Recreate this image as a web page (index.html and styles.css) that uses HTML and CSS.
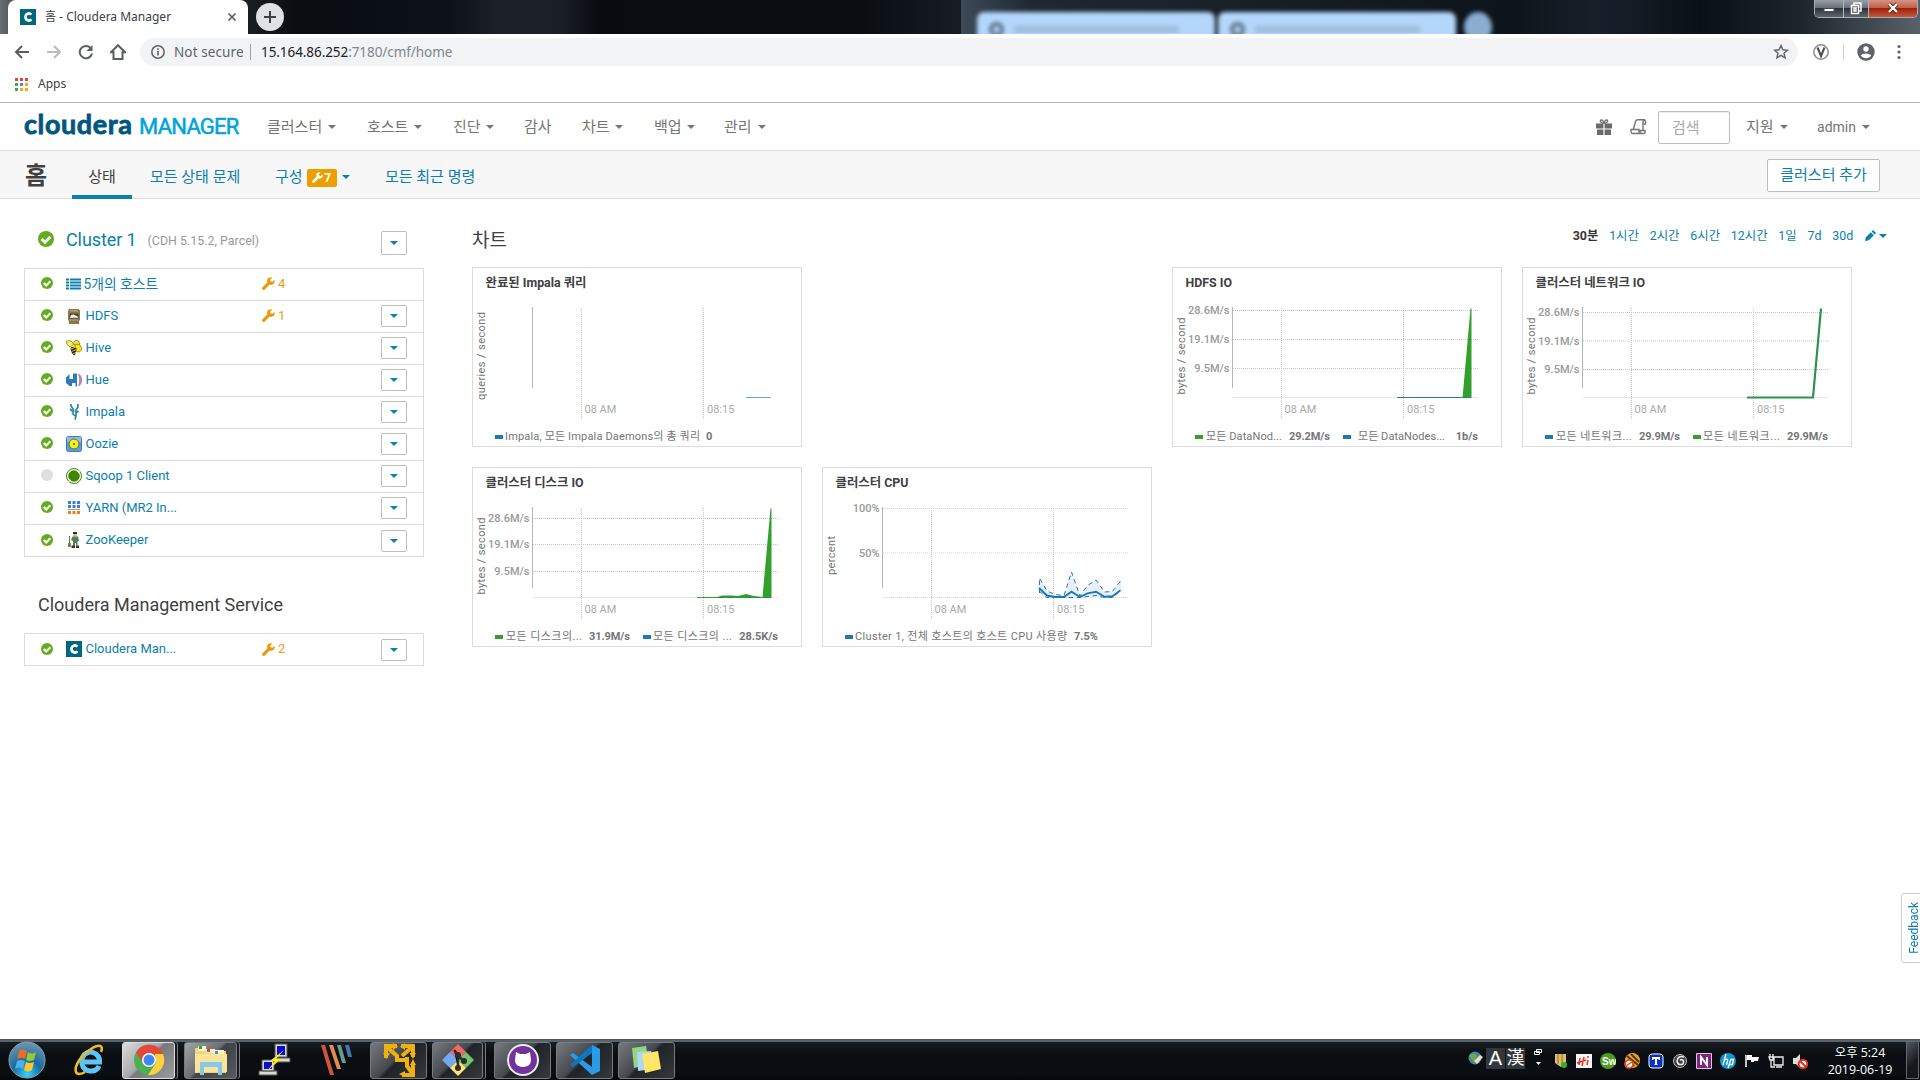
FILE: index.html
```html
<!DOCTYPE html>
<html lang="ko">
<head>
<meta charset="utf-8">
<title>홈 - Cloudera Manager</title>
<link rel="stylesheet" href="styles.css">
</head>
<body>
<svg class="defs" width="0" height="0">
  <defs>
    <symbol id="check" viewBox="0 0 16 16"><circle cx="8" cy="8" r="8" fill="#65ab1e"/><path d="M3.600 8 7 11.200 12.400 5.800" fill="none" stroke="#fff" stroke-width="2.900"/></symbol>
    <symbol id="wrench" viewBox="0 0 14 14"><path d="M1.800 12.200 7.600 6.400" stroke="currentColor" stroke-width="3.400" stroke-linecap="round"/><path d="M13.600 3.100 11 5.200 9.200 4.700 8.800 3 11 .6C8.400-.3 5.900.9 5.500 3.200 5.100 6.200 7.700 9 10.500 8.400 13 7.800 14.200 5.500 13.600 3.100Z" fill="currentColor"/></symbol>
    <symbol id="cmark" viewBox="0 0 16 16"><path fill="#00677f" d="M0 0h16v16H0z"/><path d="M11.400 5.600C9.300 3.500 5.500 4.500 5.500 8s3.800 4.500 5.900 2.400" fill="none" stroke="#fff" stroke-width="2.700"/></symbol>
  </defs>
</svg>

<div class="titlebar">
  <div class="tab">
    <svg width="16" height="16"><use href="#cmark"/></svg>
    <span class="tab-title">홈 - Cloudera Manager</span>
    <svg width="10" height="10" viewBox="0 0 10 10"><path d="M1.500 1.500l7 7m0-7l-7 7" stroke="#55595e" stroke-width="1.600"/></svg>
  </div>
  <div class="newtab"><svg width="14" height="14"><path d="M7 1v12M1 7h12" stroke="#3c4043" stroke-width="2"/></svg></div>
  <div class="glass">
    <div class="ghost"><i></i><b></b></div>
    <div class="ghost"><i></i><b></b></div>
    <div class="ghost-add"></div>
  </div>
  <div class="winbtns">
    <div class="wb wb-min"><svg width="14" height="14"><path d="M2 7.500h10v3H2z" fill="#fff" stroke="#444a55"/></svg></div>
    <div class="wb wb-max"><svg width="14" height="14" fill="none" stroke="#fff" stroke-width="1.500"><path d="M5 4V2h7v8h-2"/><path d="M2.500 4.500h7v8h-7zM5 7h2v3H5z"/></svg></div>
    <div class="wb wb-close"><svg width="14" height="14"><path d="M3 3l8 8M11 3l-8 8" stroke="#632116" stroke-width="4"/><path d="M3 3l8 8M11 3l-8 8" stroke="#fff" stroke-width="2.400"/></svg></div>
  </div>
</div>

<div class="toolbar">
  <svg class="tb" viewBox="0 0 16 16"><path d="M15 8H2M8 2 2 8l6 6" stroke="#5a5e63"/></svg>
  <svg class="tb" viewBox="0 0 16 16"><path d="M1 8h13M8 2l6 6-6 6" stroke="#b9bbbe"/></svg>
  <svg class="tb" viewBox="0 0 16 16"><path d="M13 4.500A6.200 6.200 0 1 0 14 9.500" stroke="#5a5e63"/><path d="M14.500 1v6h-6z" fill="#5a5e63"/></svg>
  <svg class="tb" viewBox="0 0 16 16"><path d="M8 1.200 1 8.200h2.500V15h9V8.200H15z" stroke="#5a5e63"/></svg>
  <div class="omnibox">
    <svg width="14" height="14"><circle cx="7" cy="7" r="6.200" fill="none" stroke="#5f6368" stroke-width="1.500"/><path d="M7 6v4.500M7 3.200v1.600" stroke="#5f6368" stroke-width="1.600"/></svg>
    <span class="notsec">Not secure</span>
    <span class="url"><em>15.164.86.252</em>:7180/cmf/home</span>
    <svg class="star" width="16" height="16"><path d="M8 1.500l1.900 4.300 4.600.4-3.500 3 1.100 4.600L8 11.400l-4.100 2.400L5 9.200l-3.500-3 4.600-.4z" fill="none" stroke="#5f6368" stroke-width="1.400"/></svg>
  </div>
  <svg class="ext" width="18" height="18"><circle cx="9" cy="9" r="7.200" fill="#fff" stroke="#8c8c8c" stroke-width="1.500"/><path d="M5.500 4.500 9 13l3.500-8.500" fill="none" stroke="#4b4b4b" stroke-width="2"/></svg>
  <i class="tb-sep"></i>
  <svg class="user" width="18" height="18"><circle cx="9" cy="9" r="8.700" fill="#5f6368"/><circle cx="9" cy="6" r="2.700" fill="#fff"/><path d="M3.800 12.600c1.500-2.800 8.900-2.800 10.400 0-2.400 3.600-8 3.600-10.400 0z" fill="#fff"/></svg>
  <svg class="kebab" width="4" height="16"><g fill="#5f6368"><circle cx="2" cy="2.500" r="1.600"/><circle cx="2" cy="8" r="1.600"/><circle cx="2" cy="13.500" r="1.600"/></g></svg>
</div>

<div class="bookmarks">
  <svg width="13" height="13"><g fill="#ea4335"><path d="M0 0h3v3H0zM5 0h3v3H5zM10 0h3v3h-3z"/></g><path d="M0 5h3v3H0zM0 10h3v3H0z" fill="#34a853"/><path d="M5 5h3v3H5z" fill="#4285f4"/><path d="M10 5h3v3h-3zM5 10h3v3H5zM10 10h3v3h-3z" fill="#fbab05"/></svg>
  <span>Apps</span>
</div>

<header class="cm-header">
  <div class="logo"><span class="logo-a">cloudera</span><span class="logo-b">MANAGER</span></div>
  <nav class="mainnav">
    <a>클러스터<i class="caret"></i></a><a>호스트<i class="caret"></i></a><a>진단<i class="caret"></i></a><a>감사</a><a>차트<i class="caret"></i></a><a>백업<i class="caret"></i></a><a>관리<i class="caret"></i></a>
  </nav>
  <svg class="gift" width="16" height="16" fill="#6a6a6a"><path d="M0 4.500h7.400v5H0zM8.600 4.500H16v5H8.600zM1 10.500h6.400V16H1zM8.600 10.500H15V16H8.600z"/><path d="M7.500 4.500C4 4 3.500 1 5.300.9c1.500 0 2.300 2 2.700 3.600.4-1.600 1.200-3.600 2.700-3.600 1.800.1 1.300 3.100-2.200 3.600" fill="none" stroke="#6a6a6a" stroke-width="1.200"/></svg>
  <svg class="scroll" width="17" height="16" fill="none" stroke="#757575" stroke-width="1.400"><path d="M3.500 10 5.500 2.500C6 .9 7 .8 8 .8h6.500c-1.500.4-1.700 1.800-1.500 4.200h2.500V2.500c0-1-.4-1.700-1.200-1.700M13 5v6M1 10.500h8v4H3c-1.300 0-2-1-2-2zM9 14.500h4.500c1.500 0 2-1.200 1.500-3h-4.500v2"/></svg>
  <div class="search">검색</div>
  <a class="h-support">지원<i class="caret"></i></a>
  <a class="h-admin">admin<i class="caret"></i></a>
</header>

<div class="subnav">
  <h1>홈</h1>
  <a class="active">상태</a>
  <a>모든 상태 문제</a>
  <a class="conf">구성<span class="badge"><svg width="11" height="11"><use href="#wrench"/></svg>7</span><i class="caret"></i></a>
  <a>모든 최근 명령</a>
  <button class="add">클러스터 추가</button>
</div>

<main class="page">
  <section class="left">
    <div class="cluster-head">
      <svg width="16" height="16"><use href="#check"/></svg>
      <a class="cname">Cluster 1</a><span class="cver">(CDH 5.15.2, Parcel)</span>
      <button class="dd"><i class="caret"></i></button>
    </div>
    <div class="services">
      <div class="row hosts"><svg class="st"><use href="#check"/></svg>
        <svg class="ic" viewBox="0 0 16 16"><path d="M0 3.500h3M4 3.500h11M0 6.500h3M4 6.500h11M0 9.500h3M4 9.500h11M0 12.500h3M4 12.500h11" stroke="#0b7fad" stroke-width="2"/></svg>
        <a>5개의 호스트</a><span class="warn"><svg width="13" height="13"><use href="#wrench"/></svg>4</span></div>
      <div class="row"><svg class="st"><use href="#check"/></svg>
        <svg class="ic" viewBox="0 0 16 16"><path d="M3 1h10l1 2v9l-1 1v3H3v-3l-1-1V3z" fill="#8d764f"/><path d="M4 2h8v1.500H4zM3.500 11.500h9v1h-9z" fill="#b79e70"/><path d="M3.500 5.500h9v5h-9z" fill="#4a453c"/><path d="M4 9.200c1-3 4-3 5-2s3 .3 3 2.500H4z" fill="#f3f5f5"/></svg>
        <a>HDFS</a><span class="warn"><svg width="13" height="13"><use href="#wrench"/></svg>1</span><button class="dd"><i class="caret"></i></button></div>
      <div class="row"><svg class="st"><use href="#check"/></svg>
        <svg class="ic" viewBox="0 0 16 16"><g stroke="#77701a" stroke-width=".8"><path d="M.5 1.500C3-.5 6.500 1 7.500 4.500L4 7C2 6 .5 4 .5 1.500z" fill="#fff34a"/><path d="M8 4.500C7 1 10-.5 12.500 1l1.500 3-3 3z" fill="#fae927"/><path d="M9 5c3-2 6.500 0 6.500 3.500S12 13 9.500 10.500z" fill="#fbe51a"/></g><path d="M4.500 8c2-2 5-1.500 6 .5 0 3-1 5-2 7-2-1-4-4-4-7.500z" fill="#2d2910"/><path d="M5 9l5-2M5.500 11.500l5-2M7 14l3-2" stroke="#dfc512"/></svg>
        <a>Hive</a><button class="dd"><i class="caret"></i></button></div>
      <div class="row"><svg class="st"><use href="#check"/></svg>
        <svg class="ic" viewBox="0 0 16 16"><path d="M0 5.500 3.500 2v12L0 11zM3.500 7H7V1.500h4v13H9.500V11H6v3H3.500z" fill="#2a7bbd"/><path d="M12 1.500c3 1 4 3.500 4 6.500s-1 5.500-4 6.500c1.500-4 1.500-9 0-13z" fill="#a985bf"/></svg>
        <a>Hue</a><button class="dd"><i class="caret"></i></button></div>
      <div class="row"><svg class="st"><use href="#check"/></svg>
        <svg class="ic" viewBox="0 0 16 16" fill="none" stroke="#3185a4" stroke-width="1.700"><path d="M5 0v2l2.500 3.500v3M12 0v3L10 6v6l-1 3.500M4 5l4 3.500M12.500 7 10 9M6 9l3 3" /></svg>
        <a>Impala</a><button class="dd"><i class="caret"></i></button></div>
      <div class="row"><svg class="st"><use href="#check"/></svg>
        <svg class="ic" viewBox="0 0 16 16"><rect x=".5" y=".5" width="15" height="15" rx="2" fill="#5d9be0" stroke="#3f77bb"/><path d="M1 1h14v5H1z" fill="#8ebcf0"/><circle cx="8" cy="8" r="5" fill="#fbf311" stroke="#596d41"/><circle cx="8" cy="8" r="1.200" fill="#6e8f26"/></svg>
        <a>Oozie</a><button class="dd"><i class="caret"></i></button></div>
      <div class="row"><svg class="st"><circle cx="6" cy="6" r="6" fill="#dedfe0"/></svg>
        <svg class="ic" viewBox="0 0 16 16"><circle cx="8" cy="8" r="7.500" fill="#fff" stroke="#398300"/><circle cx="8" cy="8" r="5.800" fill="#3e8800"/><path d="M10 2l4 1-.8 3zM2 11l3 1-1 2z" fill="#fff"/></svg>
        <a>Sqoop 1 Client</a><button class="dd"><i class="caret"></i></button></div>
      <div class="row"><svg class="st"><use href="#check"/></svg>
        <svg class="ic" viewBox="0 0 16 16"><path d="M2 1h3v3H2zM6.500 1h3v3h-3zM11 1h3v3h-3zM2 5h3v3H2zM6.500 5h3v3h-3zM11 5h3v3h-3z" fill="#3c7ed6"/><path d="M2 9h12v1H2z" fill="#999"/><path d="M2 11h3v3H2zM6.500 11h3v3h-3zM11 11h3v3h-3z" fill="#ed8015"/></svg>
        <a>YARN (MR2 In...</a><button class="dd"><i class="caret"></i></button></div>
      <div class="row"><svg class="st"><use href="#check"/></svg>
        <svg class="ic" viewBox="0 0 16 16"><path d="M3.500 4v9" stroke="#9a6844"/><path d="M2.200 11h2.600v4H2.200z" fill="#78655a"/><path d="M7 0h4v2H7z" fill="#26332f"/><path d="M7.500 2h3v2.500h-3z" fill="#d9a67d"/><path d="M6.500 4.500H12l1 4-1.500 1v4H10V11H9v3H7V9L5 8z" fill="#4d8350"/><path d="M5.500 13.500H9V16H5.500zM10 13.500h3V16h-3z" fill="#443027"/></svg>
        <a>ZooKeeper</a><button class="dd"><i class="caret"></i></button></div>
    </div>
    <h2 class="mgmt">Cloudera Management Service</h2>
    <div class="services">
      <div class="row"><svg class="st"><use href="#check"/></svg><svg class="ic"><use href="#cmark"/></svg>
        <a>Cloudera Man...</a><span class="warn"><svg width="13" height="13"><use href="#wrench"/></svg>2</span><button class="dd"><i class="caret"></i></button></div>
    </div>
  </section>

  <section class="right">
    <div class="chart-head">
      <h2>차트</h2>
      <div class="ranges"><b>30분</b><a>1시간</a><a>2시간</a><a>6시간</a><a>12시간</a><a>1일</a><a>7d</a><a>30d</a>
        <span class="edit"><svg width="11" height="11"><path d="M0 11l.8-3.800L5.800 2.200l3 3-5 5zM6.600 1.400 8 0 11 3 9.600 4.400z" fill="#0b7fad"/></svg><i class="caret"></i></span></div>
    </div>
    <div class="grid">
      <article class="card c1"><h3>완료된 Impala 쿼리</h3>
        <svg class="chart" viewBox="0 0 330 180">
          <path class="gl" d="M109.500 41v111M231.500 41v111"/><path class="ax" d="M60.500 40v81"/>
          <path d="M274 130.500h25" stroke="#6ba6d0"/>
          <text class="yl" transform="translate(13 89) rotate(-90)" textLength="88">queries / second</text>
          <text class="xl" x="112.500" y="146">08 AM</text><text class="xl" x="235" y="146">08:15</text>
          <path d="M23 168h8v4h-8z" fill="#1f77b4"/><text class="lg" x="33" y="173" textLength="195">Impala, 모든 Impala Daemons의 총 쿼리</text><text class="lg v" x="234" y="173">0</text>
        </svg></article>
      <article class="card c3"><h3>HDFS IO</h3>
        <svg class="chart" viewBox="0 0 330 180">
          <path class="gl" d="M109.500 41v111M231.500 41v111M61 43.500h245M61 72.500h245M61 101.500h245"/><path class="bl" d="M61 130.500h245"/><path class="ax" d="M60.500 40v81"/>
          <path d="M290.500 131 298.500 41.500h1V131z" fill="#33a02c"/><path d="M225 130.500h74" stroke="#2c8c4e" /><path d="M229 130.500h66" stroke="#2a7b86" stroke-dasharray="5 4"/>
          <text class="yt" x="57.500" y="47">28.6M/s</text><text class="yt" x="57.500" y="76">19.1M/s</text><text class="yt" x="57.500" y="105">9.5M/s</text>
          <text class="yl" transform="translate(13 89) rotate(-90)" textLength="77">bytes / second</text>
          <text class="xl" x="112.500" y="146">08 AM</text><text class="xl" x="235" y="146">08:15</text>
          <path d="M23 168h8v4h-8z" fill="#33a02c"/><text class="lg" x="34" y="173" textLength="76">모든 DataNod...</text><text class="lg v" x="117" y="173" textLength="41">29.2M/s</text>
          <path d="M171 168h8v4h-8z" fill="#1f77b4"/><text class="lg" x="186" y="173" textLength="87">모든 DataNodes...</text><text class="lg v e" x="306" y="173">1b/s</text>
        </svg></article>
      <article class="card c4"><h3>클러스터 네트워크 IO</h3>
        <svg class="chart" viewBox="0 0 330 180">
          <path class="gl" d="M109.500 41v111M231.500 41v111M61 45.500h245M61 74h245M61 102.500h245"/><path class="bl" d="M61 130.500h245"/><path class="ax" d="M60.500 40v81"/>
          <path d="M225 130.500h66L299 41.500" fill="none" stroke="#2b934b" stroke-width="2.200"/>
          <text class="yt" x="57.500" y="49">28.6M/s</text><text class="yt" x="57.500" y="78">19.1M/s</text><text class="yt" x="57.500" y="106">9.5M/s</text>
          <text class="yl" transform="translate(13 89) rotate(-90)" textLength="77">bytes / second</text>
          <text class="xl" x="112.500" y="146">08 AM</text><text class="xl" x="235" y="146">08:15</text>
          <path d="M23 168h8v4h-8z" fill="#1f77b4"/><text class="lg" x="34" y="173" textLength="76">모든 네트워크...</text><text class="lg v" x="117" y="173" textLength="41">29.9M/s</text>
          <path d="M171 168h8v4h-8z" fill="#33a02c"/><text class="lg" x="181" y="173" textLength="77">모든 네트워크...</text><text class="lg v e" x="306" y="173" textLength="41">29.9M/s</text>
        </svg></article>
      <article class="card"><h3>클러스터 디스크 IO</h3>
        <svg class="chart" viewBox="0 0 330 180">
          <path class="gl" d="M109.500 41v111M231.500 41v111M61 51.500h245M61 77.500h245M61 104.500h245"/><path class="bl" d="M61 130.500h245"/><path class="ax" d="M60.500 40v81"/>
          <path d="M225 131v-1h20l5-1.500h10l6 .5 8-2 8 2 8.500 1L298.500 41.500h1V131z" fill="#33a02c"/><path d="M247 130.500h52" stroke="#27826c" stroke-dasharray="5 4"/>
          <text class="yt" x="57.500" y="55">28.6M/s</text><text class="yt" x="57.500" y="81">19.1M/s</text><text class="yt" x="57.500" y="108">9.5M/s</text>
          <text class="yl" transform="translate(13 89) rotate(-90)" textLength="77">bytes / second</text>
          <text class="xl" x="112.500" y="146">08 AM</text><text class="xl" x="235" y="146">08:15</text>
          <path d="M23 168h8v4h-8z" fill="#33a02c"/><text class="lg" x="34" y="173" textLength="76">모든 디스크의...</text><text class="lg v" x="117" y="173" textLength="41">31.9M/s</text>
          <path d="M171 168h8v4h-8z" fill="#1f77b4"/><text class="lg" x="181" y="173" textLength="79">모든 디스크의 ...</text><text class="lg v e" x="306" y="173">28.5K/s</text>
        </svg></article>
      <article class="card"><h3>클러스터 CPU</h3>
        <svg class="chart" viewBox="0 0 330 180">
          <path class="gl" d="M109.500 41v111M231.500 41v111"/><path class="gl lt" d="M61 41.500h245M61 86h245M61 130.500h245"/><path class="ax" d="M60.500 40v81"/>
          <path d="M217 110l8 14 8 3.500 9 1 7.500-23.500 8.500 24 7.500-10.500 8.500-5.500 8.500 12 8-.5 8.500-11v10l-8.500 7.500H225l-8-6.500z" fill="#e7f0f7"/>
          <path d="M217.500 126v-15l7.500 13 8 3.500 9 1 7.500-23.500 8.500 24 7.500-10.500 8.500-5.500 8.500 12 8-.5 8.500-11" fill="none" stroke="#1f77b4" stroke-dasharray="4.500 3.500"/>
          <path d="M217 124l8 6.500h32l17-2 8.500 2h8l8.500-7.500" fill="none" stroke="#1f77b4" stroke-dasharray="4.500 3.500"/>
          <path d="M217 121l8 7.500 8 1.500h9l7.500-5.300 8.500 5.300 7.500-3.700 8.500-1.600 8.500 5 8-.5 8-6" fill="none" stroke="#1f77b4" stroke-width="1.900"/>
          <text class="yt" x="57.500" y="45">100%</text><text class="yt" x="57.500" y="90">50%</text>
          <text class="yl" transform="translate(13 88.500) rotate(-90)" textLength="39">percent</text>
          <text class="xl" x="112.500" y="146">08 AM</text><text class="xl" x="235" y="146">08:15</text>
          <path d="M23 168h8v4h-8z" fill="#1f77b4"/><text class="lg" x="33" y="173" textLength="212">Cluster 1, 전체 호스트의 호스트 CPU 사용량</text><text class="lg v" x="252" y="173">7.5%</text>
        </svg></article>
    </div>
  </section>
</main>
<div class="feedback"><span>Feedback</span></div>

<footer class="taskbar">
  <svg class="orb" width="40" height="38" viewBox="0 0 40 38"><defs><radialGradient id="og" cx=".5" cy=".9" r=".9"><stop offset="0" stop-color="#35d2ff"/><stop offset=".45" stop-color="#1a6a9e"/><stop offset="1" stop-color="#6f98ae"/></radialGradient></defs><circle cx="20" cy="19" r="18" fill="url(#og)" stroke="#86a3b2"/><path d="M12 10q4-3 8 0l-2 8q-4-2-8 0z" fill="#ee6a28"/><path d="M21 11q4 3 8 0l-2 8q-4 2-8 0z" fill="#94c93b"/><path d="M10 20q4-2 8 0l-2 8q-4-3-8 0z" fill="#52aee8"/><path d="M19 21q4 2 8 0l-2 8q-4 3-8 0z" fill="#fdca2e"/></svg>
  <svg class="ie" width="34" height="34" viewBox="0 0 34 34"><path d="M27 23c-3 7-15 7-17-2-2-11 10-16 16-8 2 3 1.500 4 1.500 6H11" fill="none" stroke="#5cc5f4" stroke-width="5"/><path d="M29 9C32 2 27 1 19 6 9 12 2 23 4 29c1 3 6 2 9 0" fill="none" stroke="#f2bd24" stroke-width="2.500"/></svg>
  <div class="app bright stack"><svg width="32" height="32" viewBox="0 0 32 32"><circle cx="16" cy="16" r="15" fill="#4caf50"/><path d="M3 8.500A15 15 0 0 1 30 10H16l-6 9z" fill="#e4483b"/><path d="M30 10A15 15 0 0 1 15 31l8-12-1-9z" fill="#fcd33f"/><circle cx="16" cy="16" r="7" fill="#fff"/><circle cx="16" cy="16" r="5.500" fill="#4285f4"/></svg></div>
  <div class="app stack mid"><svg width="34" height="34" viewBox="0 0 34 34"><path d="M1 5h9l2 3h20v22H1z" fill="#f1d477"/><path d="M4 3h8v5H4zM12 6h9v4h-9zM20 7h10v4H20z" fill="#fff4c9"/><path d="M1 11h32v18H1z" fill="#f8e59b"/><path d="M6 19h22v13h-4v-8H10v8H6z" fill="#86c9ea"/><path d="M5 3h3v3H5z" fill="#1fad39"/><path d="M13 6h3v3h-3z" fill="#d8452f"/><path d="M21 8h3v3h-3z" fill="#3894df"/></svg></div>
  <svg class="putty" width="34" height="34" viewBox="0 0 34 34"><g fill="#d9d9d0" stroke="#555"><path d="M17 1h12v13H17zM16 15h16v4H16zM4 17h12v11H4zM1 28h18v4H1z"/></g><path d="M19 3h8v9h-8zM6 19h8v7H6z" fill="#0b0bd0"/><path d="M26 7 12 18h5l-8 10 14-12h-5z" fill="#ffef13"/></svg>
  <svg class="stripes" width="32" height="32" viewBox="0 0 32 32"><path d="M1 1h4l9 30h-4z" fill="#d45438"/><path d="M9 1h4l8 24h-4z" fill="#e38a4d"/><path d="M17 1h4l5 18h-4z" fill="#689c8e"/><path d="M25 1h4l3 12h-4z" fill="#4479b0"/></svg>
  <div class="app vm"><svg width="34" height="34" viewBox="0 0 34 34"><g fill="none" stroke="#eeb111" stroke-width="4"><path d="M4 15V3h11M19 3h12v11M31 20v12H20M6 5l9 8v4h10M29 5l-9 8M25 14v9l5 7"/></g><path d="M1 10h7l-3.500 6zM11 0v7l5-3.500zM23 0v7l-5-3.500zM27.500 10h6.500l-3 6zM28 22h6l-3-6zM23 28v6l-6-3z" fill="#eeb111"/></svg></div>
  <div class="app git stack"><svg width="32" height="32" viewBox="0 0 32 32"><g><path d="M16 0l8 8-8 8-8-8z" fill="#f06b66"/><path d="M8 8l8 8-8 8-8-8z" fill="#74a9f4"/><path d="M24 8l8 8-8 8-8-8z" fill="#79c16d"/><path d="M16 16l8 8-8 8-8-8z" fill="#ffe37c"/></g><path d="M12 6l4 5v14M16 12l6 5" stroke="#292d2f" stroke-width="2.500"/><g fill="#292d2f"><circle cx="16" cy="11" r="3"/><circle cx="22" cy="17" r="3"/><circle cx="16" cy="24" r="3"/></g></svg></div>
  <div class="app gh"><svg width="34" height="34" viewBox="0 0 34 34"><circle cx="17" cy="17" r="15" fill="#71329b" stroke="#eee" stroke-width="2"/><path d="M10 9l4 2h6l4-2 1 8c0 5-4 7-8 7s-8-2-8-7z" fill="#fff"/></svg></div>
  <div class="app vs"><svg width="32" height="32" viewBox="0 0 32 32"><path d="M23 1l8 4v22l-8 4L1 11l3-2 19 14z" fill="#2a9be8"/><path d="M1 21l3 2L23 9V1z" fill="#0b78c2"/></svg></div>
  <div class="app st-notes"><svg width="34" height="32" viewBox="0 0 34 32"><path d="M2 4l14-2 3 18-15 4z" fill="#93d585"/><path d="M7 8l14-1 2 18-15 2z" fill="#acd8f6"/><path d="M12 10l16-3 3 18-16 4z" fill="#ffe66b"/></svg></div>

  <div class="tray">
    <svg class="t-globe" width="16" height="16"><circle cx="8" cy="7" r="6.500" fill="#4384a9"/><path d="M2 5q5-5 8 0l-3 6z" fill="#76a64a"/><path d="M7 10l6-6 3 2-6 7z" fill="#e4ddc2"/></svg>
    <span class="ime">A</span><span class="ime">漢</span>
    <svg class="t-opt" width="9" height="18"><path d="M2.500 1.500h5v3h-5zM.5 3.500h5v3h-5z" fill="#111" stroke="#fff"/><path d="M2 14h5l-2.500 3z" fill="#fff"/></svg>
    <div class="icons">
      <svg viewBox="0 0 16 16"><path d="M3 1h11v9l-5 4-6-4z" fill="#dfbd67"/><path d="M6 1v10M10 1v12" stroke="#8f6d24"/><circle cx="12" cy="12" r="3" fill="#2bb52e"/></svg>
      <svg viewBox="0 0 16 16"><path d="M0 1h16v14H0z" fill="#fbf4f1"/><path d="M1 10l9-3M4 5 3 12M8 4 6 13M12 7l-1 5M12 3v2" stroke="#de3327" stroke-width="1.500"/></svg>
      <svg viewBox="0 0 16 16"><circle cx="8" cy="8" r="8" fill="#4f9d20"/><text x="2" y="12" font-size="10" font-weight="700" fill="#fff">Sw</text></svg>
      <svg viewBox="0 0 16 16"><circle cx="8.500" cy="7.500" r="7.500" fill="#eea629"/><path d="M3 3l11 9M7 1l8 8M4 7l6 6" stroke="#51330b" stroke-width="2"/><circle cx="5" cy="11" r="4" fill="#fff" stroke="#ea4a1e" stroke-width="1.700"/><path d="M2 13l6-4" stroke="#ea4a1e" stroke-width="1.500"/></svg>
      <svg viewBox="0 0 16 16"><rect x="1" y="1" width="14" height="14" rx="3" fill="#0833c2" stroke="#fff"/><path d="M4 4h8v3h-1L10 6H9v5l1 1H6l1-1V6H6L5 7H4z" fill="#fff"/></svg>
      <svg viewBox="0 0 16 16"><circle cx="8" cy="8" r="6.500" fill="#444" stroke="#bbb"/><path d="M12 4Q6 2 5 8q1 5 6 3 2-5-3-4" fill="none" stroke="#eee" stroke-width="1.500"/></svg>
      <svg viewBox="0 0 16 16"><path d="M.5.5h15v15H.5z" fill="#7d267f" stroke="#e5bde5"/><path d="M5 12V4l6 8V4" fill="none" stroke="#fff" stroke-width="2"/></svg>
      <svg viewBox="0 0 16 16"><circle cx="8" cy="8" r="8" fill="#1496cf"/><path d="M6 1 3 12M4.500 7q4-2 3 1l-1 4M11 6 8 15M10.500 6.500h3l-1 5H9" fill="none" stroke="#fff" stroke-width="1.300"/></svg>
      <svg viewBox="0 0 16 16"><path d="M2 2v12" stroke="#fff" stroke-width="1.500"/><path d="M3 2h5v2h2v5H7V7H3zM10 4h5l-1 4h-4z" fill="#fff"/></svg>
      <svg viewBox="0 0 16 16" fill="none" stroke="#eee" stroke-width="1.300"><path d="M6 4h9v8H6zM8 14h6M2 1v3M5 1v3M1 4h4v3H2zM3 7v7h4"/></svg>
      <svg viewBox="0 0 16 16"><path d="M1 5h3l4-4v14l-4-4H1z" fill="#ddd"/><circle cx="11" cy="11" r="4.300" fill="#fff" stroke="#e02e20" stroke-width="2"/><path d="M8 8l6 6" stroke="#e02e20" stroke-width="2"/></svg>
    </div>
    <div class="clock"><span>오후 5:24</span><span>2019-06-19</span></div>
    <div class="peek"></div>
  </div>
</footer>
</body>
</html>
```

FILE: styles.css
```css
* { box-sizing: border-box; }
body {
  margin: 0; width: 1920px; height: 1080px; overflow: hidden;
  display: flex; flex-direction: column; background: #fff; color: #404040;
  font: 13px/20px Roboto, "Noto Sans CJK KR", sans-serif;
}
.defs { position: absolute; }
svg { flex: none; display: block; }
h1, h2, h3 { margin: 0; font-weight: 400; }
a { color: #0b7fad; white-space: nowrap; }
.caret { flex: none; display: inline-block; border: 4px solid transparent; border-top-color: currentColor; border-bottom: 0; }

.titlebar {
  height: 34px; flex: none; display: flex; align-items: flex-start;
  background: linear-gradient(90deg, #6b6e71 0, #54585b 10px, #1a1e23 248px, #090d12 300px, #0d1218 450px, #1c2029 500px, #1a1e26 560px, #080c10 600px, #0a0e13 860px, #171c22 960px, #0c131a 1500px, #17202a 1600px, #0a1017 1700px, #1c242c 1800px, #59626b 1920px);
}
.tab {
  width: 240px; height: 34px; margin-left: 8px; padding: 5px 11px 6px 12px; border-radius: 8px 8px 0 0;
  background: #fff; display: flex; align-items: center;
}
.tab-title { margin-left: 9px; flex: 1; font: 12px/18px "Noto Sans", "Noto Sans CJK KR", sans-serif; color: #3c4043; }
.newtab { width: 28px; height: 28px; margin: 3px 0 0 8px; border-radius: 50%; background: #dee1e6; display: grid; place-items: center; }
.glass { width: 560px; height: 34px; margin-left: 677px; padding: 12px 0 0 16px; display: flex; gap: 3px; overflow: hidden; background: linear-gradient(90deg, #3c4a59, #1f2831 70px, #131a22 400px, #0c131a); }
.ghost { width: 238px; height: 30px; padding: 10px 12px; border-radius: 7px; background: #b3d7fb; display: flex; gap: 10px; filter: blur(2px); }
.ghost i { width: 15px; height: 15px; border-radius: 50%; border: 4px solid #5a6f85; }
.ghost b { width: 165px; height: 7px; margin-top: 4px; background: #9fbedd; }
.ghost-add { width: 28px; height: 30px; margin-left: 5px; border-radius: 50%; background: #8badd0; filter: blur(2px); }
.winbtns { display: flex; height: 18px; margin: 0 2px 0 auto; border: 1px solid #a5adb5; border-top: 0; border-radius: 0 0 5px 5px; overflow: hidden; }
.wb { display: grid; place-items: center; background: linear-gradient(#9aa0a8, #676e78 48%, #2d333d 50%, #5e6670); border-right: 1px solid #b2b7bd; padding-bottom: 2px; }
.wb-min { width: 29px; } .wb-max { width: 25px; }
.wb-close { width: 48px; border: 0; background: linear-gradient(#d59484, #c05b46 48%, #9e220e 50%, #c4583c); }

.toolbar { height: 38px; flex: none; padding: 0 19px 0 14px; display: flex; align-items: center; }
.tb { width: 16px; height: 16px; margin: 0 16px 2px 0; fill: none; stroke-width: 2; }
.omnibox { width: 1658px; height: 28px; flex: none; margin: 0 0 2px -2px; padding: 0 9px 0 11px; border-radius: 14px; background: #f1f3f4; display: flex; align-items: center; font: 13.5px/20px "Noto Sans", sans-serif; color: #80868b; }
.notsec { width: 77px; margin-left: 9px; border-right: 1px solid #9aa0a6; line-height: 16px; color: #5f6368; white-space: nowrap; letter-spacing: .1px; }
.url { margin-left: 10px; letter-spacing: -.07px; }
.url em { font-style: normal; color: #202124; }
.star { margin-left: auto; }
.ext { margin: 0 13px 2px 14px; }
.tb-sep { width: 1px; height: 16px; margin: 0 13px 2px 0; background: #ccd0d4; }
.user { margin-bottom: 2px; }
.kebab { margin: 0 0 2px auto; }
.bookmarks { height: 31px; flex: none; padding: 0 15px 6px; display: flex; align-items: center; gap: 10px; border-bottom: 1px solid #b6b6b6; font: 12px/18px "Noto Sans", sans-serif; color: #3c4043; }

.cm-header { height: 48px; flex: none; padding: 0 50px 0 24px; display: flex; align-items: center; border-bottom: 1px solid #dcdcdc; font-size: 14px; color: #757575; }
.cm-header a { color: #757575; display: flex; align-items: center; padding-top: 1px; }
.cm-header .caret { margin-left: 6px; }
.logo { width: 243px; display: flex; align-items: baseline; line-height: 28px; white-space: nowrap; padding-bottom: 2px; }
.logo-a { width: 115px; font: 700 27px/28px Lato, sans-serif; letter-spacing: .6px; color: #00567f; -webkit-text-stroke: .8px #00567f; }
.logo-b { font: 400 22px/28px Roboto, sans-serif; letter-spacing: -.75px; color: #00a3df; -webkit-text-stroke: .5px #00a3df; }
.mainnav { flex: 1; display: grid; grid-template-columns: 100px 86px 71px 58px 72px 70px 80px; font-size: 15px; }
.mainnav a:nth-child(3) .caret, .mainnav a:nth-child(5) .caret, .mainnav a:nth-child(6) .caret { margin-left: 5px; }
.gift { margin-right: 18px; }
.scroll { margin-right: 11px; }
.search { width: 72px; height: 33px; margin-top: 1px; padding: 0 13px; border: 1px solid #bebebe; border-radius: 2px; line-height: 32px; font-size: 15px; color: #aaa; box-shadow: inset 0 1px 1px #eee; }
.h-support { width: 71px; margin-left: 16px; font-size: 15px; }

.subnav { height: 48px; flex: none; padding: 0 40px 0 24px; display: grid; grid-template-columns: 48px 60px 143px 110px 150px 1fr; align-items: center; background: #f7f7f7; border-bottom: 1px solid #dcdcdc; font-size: 15px; }
.subnav h1 { font-size: 24px; font-weight: 700; padding: 2px 0 0 1px; }
.subnav > a { padding-top: 3px; }
.subnav > a:nth-child(3) { padding-left: 18px; }
.subnav .active { align-self: stretch; text-align: center; color: #404040; height: 48px; border-bottom: 4px solid #0b7fad; line-height: 46px; }
.conf { display: flex; align-items: center; }
.badge { width: 30px; height: 18px; margin: 2px 5px 0 4px; border-radius: 2px; background: #eba000; color: #fff; display: flex; align-items: center; justify-content: center; gap: 1px; font-size: 12px; font-weight: 700; }
.add { justify-self: end; width: 113px; height: 33px; padding: 0; border: 1px solid #bebebe; border-radius: 2px; background: #fff; color: #0b7fad; font: 15px/28px Roboto, "Noto Sans CJK KR", sans-serif; }

.page { flex: 1; display: flex; gap: 48px; padding: 0 0 0 24px; }
.left { width: 400px; padding-top: 28px; }
.cluster-head { height: 41px; padding: 0 17px 0 13px; display: flex; align-items: flex-start; }
.cluster-head > svg { margin: 4px 12px 0 1px; }
.cname { font-size: 18px; line-height: 25px; letter-spacing: -.1px; }
.cver { margin: 4px auto 0 11px; font-size: 12px; letter-spacing: .02px; color: #999; }
.dd { width: 26px; height: 22px; padding: 0; border: 1px solid #bebebe; border-radius: 2px; background: #fff; color: #0b7fad; display: grid; place-items: center; }
.cluster-head .dd { height: 24px; margin-top: 4px; }
.services { border: 1px solid #dcdcdc; }
.row { height: 32px; padding: 0 16px 2px; display: flex; align-items: center; border-bottom: 1px solid #dcdcdc; }
.row:last-child { height: 31px; border-bottom: 0; padding-bottom: 1px; }
.st { width: 12px; height: 12px; margin: 0 13px 1px 0; }
.ic { width: 16px; height: 16px; margin-right: 3.500px; }
.hosts .ic { margin-right: 1.500px; }
.row a { width: 176px; }
.hosts a { width: 178px; font-size: 13.800px; }
.warn { display: flex; align-items: center; gap: 3.500px; color: #eb9b12; }
.row .dd { margin: 1px 0 0 auto; }
.cver { font-size: 12.400px; }
.mgmt { margin: 37px 0 17px 14px; font-size: 18px; line-height: 22px; }

.right { width: 1415px; padding-top: 24px; }
.chart-head { height: 44px; display: flex; justify-content: space-between; align-items: flex-start; }
.chart-head h2 { font-size: 19px; line-height: 36px; }
.ranges { display: flex; gap: 10.800px; font-size: 12.400px; line-height: 25px; }
.ranges b { color: #333; }
.edit { display: flex; align-items: center; gap: 3px; color: #0b7fad; margin-left: 1px; }
.grid { display: grid; grid-template-columns: repeat(4, 330px); gap: 20px; grid-auto-rows: 180px; }
.card { display: grid; border: 1px solid #dcdcdc; }
.card h3 { grid-area: 1 / 1; padding: 4px 12.500px; font-size: 12.400px; line-height: 21px; font-weight: 700; }
.c3 { grid-column: 3; }
.c4 { grid-column: 4; }
.chart { grid-area: 1 / 1; width: 330px; height: 180px; margin: -1px; font-size: 11px; }
.gl { stroke: #c4c4c4; stroke-dasharray: 1 1; fill: none; }
.lt { stroke: #d4d4d4; }
.bl { stroke: #e6e6e6; }
.ax { stroke: #b5b5b5; }
.yt { text-anchor: end; fill: #999; font-weight: 500; }
.yl { text-anchor: middle; fill: #757575; }
.xl { fill: #aaa; }
.lg { fill: #757575; }
.v { font-weight: 700; }
.e { text-anchor: end; }

.feedback { position: absolute; left: 1901px; top: 893px; width: 20px; height: 70px; padding-left: 2px; border: 1px solid #ccc; border-radius: 3px 0 0 3px; background: #fff; display: grid; place-items: center; font-size: 12px; color: #0b7fad; }
.feedback span { writing-mode: vertical-rl; transform: rotate(180deg); }

.taskbar { height: 40px; flex: none; display: flex; align-items: center; border-top: 2px solid #59636c; background: linear-gradient(#181d22, #0a0e12 12px, #0b0f14 80%, #050709); padding: 0 0 2px 7px; box-shadow: 0 -1px 0 #4a545d; }
.ie { margin: 0 16px 0 25px; }
.app { width: 57px; height: 37px; flex: none; border: 1px solid #787c80; border-radius: 3px; display: grid; place-items: center; background: linear-gradient(135deg, #777b7f, #45494d 45%, #202428 50%, #34383b); margin-right: 5px; }
.stack { width: 53px; box-shadow: 2px 0 0 #15191d, 3px 0 0 #777b80; margin-right: 9px; }
.git { width: 51px; margin-right: 11px; }
.bright { background: linear-gradient(135deg, #d9dbdc, #a6a8aa 45%, #77797b 50%, #9b9c9d); border-color: #ddd; }
.mid { background: linear-gradient(135deg, #a2a5a7, #6c6f72 45%, #3f4346 50%, #565a5e); }
.putty { margin-left: 12px; }
.stripes { margin: 0 18px 0 28px; }
.tray { margin-left: auto; height: 38px; display: flex; align-items: center; }
.ime { width: 19px; height: 21px; margin: 0 0 3px 1px; background: #33373b; color: #fff; font: 20px/20px "Liberation Sans", "Noto Sans CJK KR", sans-serif; text-align: center; }
.ime + .ime { font-size: 18px; }
.t-globe { margin: 0 2px 3px 0; }
.t-opt { margin: 0 9px 6px 9px; }
.icons { display: flex; gap: 8px; padding-top: 2px; font-family: "Liberation Sans", sans-serif; }
.icons svg { width: 16px; height: 16px; }
.clock { width: 66px; margin: 2px 13px 0 19px; display: flex; flex-direction: column; align-items: center; font: 12.400px/17px "Open Sans", "Noto Sans CJK KR", sans-serif; color: #fff; white-space: nowrap; }
.peek { width: 13px; height: 38px; margin-right: 1px; border: 1px solid #62676b; background: linear-gradient(135deg, #55595d, #15191d 60%); }
```
